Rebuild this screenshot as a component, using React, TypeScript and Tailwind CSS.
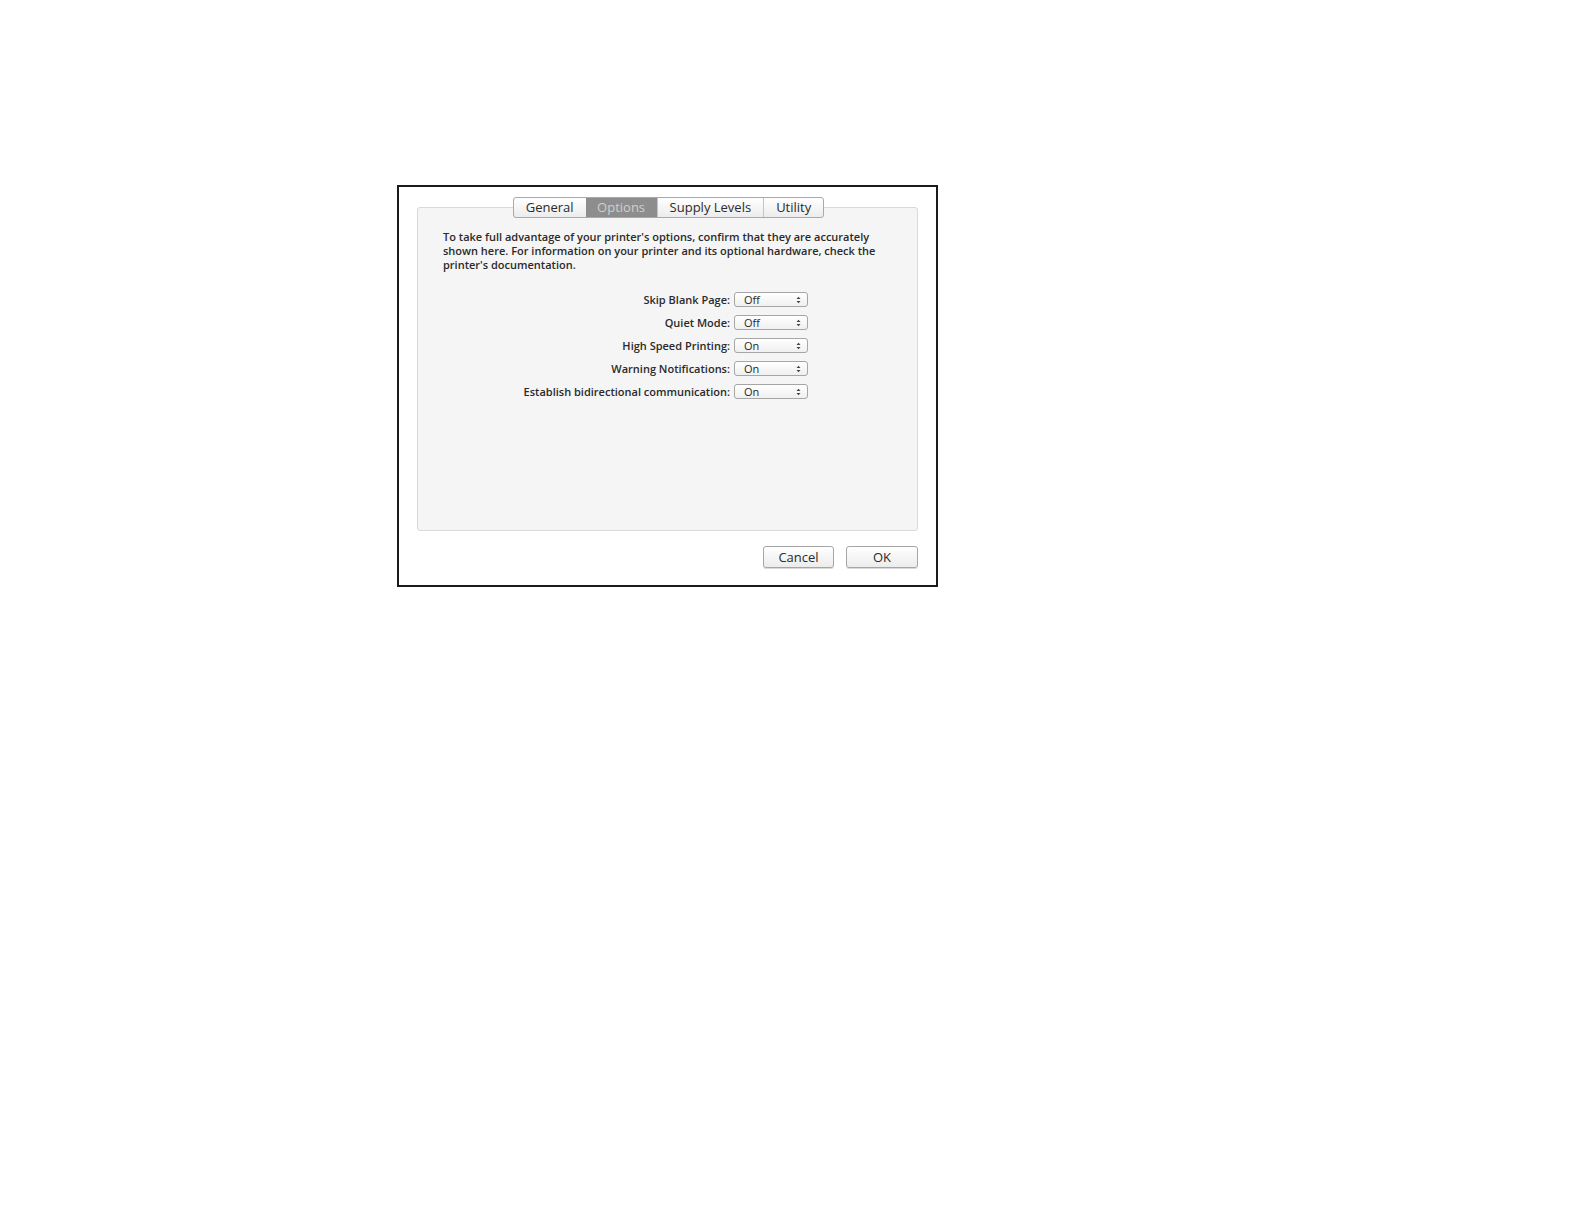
const options = [
  { label: "Skip Blank Page:", value: "Off" },
  { label: "Quiet Mode:", value: "Off" },
  { label: "High Speed Printing:", value: "On" },
  { label: "Warning Notifications:", value: "On" },
  { label: "Establish bidirectional communication:", value: "On" },
];

const tabs = ["General", "Options", "Supply Levels", "Utility"];

function Arrows() {
  return (
    <svg width="5" height="8" viewBox="0 0 5 8" className="text-[#444]">
      <path d="M0.5 3 L2.5 0.8 L4.5 3 Z" fill="currentColor" />
      <path d="M0.5 5 L2.5 7.2 L4.5 5 Z" fill="currentColor" />
    </svg>
  );
}

export default function App() {
  return (
    <div className="min-h-[1224px] bg-white pl-[397px] pt-[185px] font-['Open_Sans','Liberation_Sans',sans-serif] text-[#2a2a2a]">
      <div className="flex h-[402px] w-[541px] flex-col border-2 border-[#1a1a1a] bg-white pl-[18px] pr-[18px] pt-[10px]">
        {/* tabs */}
        <div className="relative z-10 flex justify-center pl-[2px]">
          <div className="flex h-[21px] overflow-hidden rounded-[3px] border border-[#a9a9a9] bg-gradient-to-b from-white to-[#ececec] text-[13px] font-medium leading-[19px]">
            {tabs.map((t, i) => (
              <div
                key={t}
                className={
                  t === "Options"
                    ? "flex w-[71px] items-center justify-center bg-[#8d8d8d] text-[#cfcfcf]"
                    : "flex items-center justify-center px-[12px] " + (i > 0 ? "border-l border-[#c4c4c4]" : "")
                }
              >
                {t}
              </div>
            ))}
          </div>
        </div>

        {/* panel */}
        <div className="-mt-[11px] flex h-[324px] w-[501px] flex-col rounded-[3px] border border-[#d9d9d9] bg-[#f5f5f5] pl-[25px] pt-[22px]">
          <p className="w-[445px] text-[11px] font-semibold leading-[14px]">
            To take full advantage of your printer's options, confirm that they are accurately shown here. For information on your printer and its optional hardware, check the printer's documentation.
          </p>
          <div className="mt-[20px] flex flex-col gap-[8px]">
            {options.map((o) => (
              <div key={o.label} className="flex h-[15px] items-center">
                <div className="w-[287px] text-right text-[11px] font-semibold leading-[15px]">{o.label}</div>
                <div className="ml-[4px] flex h-[15px] w-[74px] items-center justify-between rounded-[3px] border border-[#a6a6a6] bg-gradient-to-b from-white to-[#f0f0f0] pl-[9px] pr-[6px] text-[11px] font-medium leading-[13px]">
                  <span>{o.value}</span>
                  <Arrows />
                </div>
              </div>
            ))}
          </div>
        </div>

        {/* buttons */}
        <div className="mt-[15px] flex justify-end gap-[12px]">
          <button className="h-[22px] w-[71px] rounded-[3px] border border-[#a6a6a6] bg-gradient-to-b from-white to-[#ececec] text-[13px] font-medium leading-[20px] shadow-[0_1px_0_#d9d9d9]">
            Cancel
          </button>
          <button className="h-[22px] w-[72px] rounded-[3px] border border-[#a6a6a6] bg-gradient-to-b from-white to-[#ececec] text-[13px] font-medium leading-[20px] shadow-[0_1px_0_#d9d9d9]">
            OK
          </button>
        </div>
      </div>
    </div>
  );
}
